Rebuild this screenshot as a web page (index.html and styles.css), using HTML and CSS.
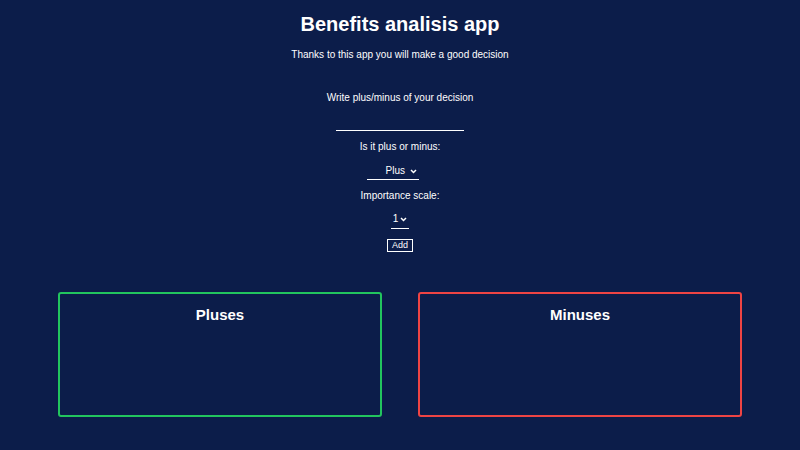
FILE: index.html
```html
<!DOCTYPE html>
<html>
<head>
<meta charset="utf-8">
<link rel="stylesheet" href="styles.css">
</head>
<body>
<header class="head">
  <h1 class="title">Benefits analisis app</h1>
  <p class="subtitle">Thanks to this app you will make a good decision</p>
</header>
<form class="form">
  <label class="label first">Write plus/minus of your decision</label>
  <input class="text-input" type="text">
  <label class="label l2">Is it plus or minus:</label>
  <div class="select plus-select"><span>Plus</span><svg width="7" height="5" viewBox="0 0 7 5"><path d="M1 1 L3.5 3.5 L6 1" fill="none" stroke="#fff" stroke-width="1.5"/></svg></div>
  <label class="label l3">Importance scale:</label>
  <div class="select num-select"><span>1</span><svg width="7" height="5" viewBox="0 0 7 5"><path d="M1 1 L3.5 3.5 L6 1" fill="none" stroke="#fff" stroke-width="1.5"/></svg></div>
  <button class="add" type="button">Add</button>
</form>
<section class="columns">
  <div class="box pluses"><h2 class="box-title">Pluses</h2></div>
  <div class="box minuses"><h2 class="box-title">Minuses</h2></div>
</section>
</body>
</html>
```
FILE: styles.css
```css
html, body {
  margin: 0;
  padding: 0;
  background: #0c1d4a;
  color: #fff;
  font-family: "Liberation Sans", Arial, sans-serif;
  height: 100%;
}
.head {
  display: flex;
  flex-direction: column;
  align-items: center;
  padding-top: 12px;
}
.title {
  margin: 0;
  font-size: 20px;
  font-weight: bold;
  line-height: 24px;
}
.subtitle {
  margin: 13px 0 0;
  font-size: 10px;
  line-height: 12px;
}
.form {
  display: flex;
  flex-direction: column;
  align-items: center;
  margin-top: 31px;
}
.label {
  font-size: 10px;
  line-height: 12px;
}
.text-input {
  margin-top: 14px;
  width: 128px;
  height: 12px;
  background: transparent;
  border: none;
  border-bottom: 1.5px solid #fff;
  outline: none;
  padding: 0;
  color: #fff;
  box-sizing: content-box;
}
.l2 { margin-top: 10px; }
.l3 { margin-top: 10px; }
.select {
  display: flex;
  align-items: center;
  font-size: 10px;
  line-height: 12px;
  border-bottom: 1.5px solid #fff;
  box-sizing: border-box;
}
.plus-select {
  margin-top: 12px;
  width: 52px;
  margin-right: 14px;
  justify-content: flex-end;
  gap: 5px;
  padding: 0 2px 2px 0;
}
.num-select {
  margin-top: 11px;
  width: 18px;
  justify-content: center;
  gap: 2px;
  padding-bottom: 3px;
}
.add {
  margin-top: 10px;
  background: transparent;
  color: #fff;
  border: 1.5px solid #fff;
  font-family: "Liberation Sans", Arial, sans-serif;
  font-size: 9px;
  line-height: 9px;
  padding: 1px 4px;
  border-radius: 0;
}
.columns {
  display: flex;
  justify-content: space-between;
  padding: 0 58px;
  margin-top: 40px;
}
.box {
  width: 324px;
  height: 125px;
  box-sizing: border-box;
  border: 2px solid;
  border-radius: 3px;
  display: flex;
  flex-direction: column;
  align-items: center;
}
.pluses { border-color: #22c55e; }
.minuses { border-color: #ef4444; }
.box-title {
  margin: 12px 0 0;
  font-size: 15px;
  line-height: 18px;
  font-weight: bold;
}
```
